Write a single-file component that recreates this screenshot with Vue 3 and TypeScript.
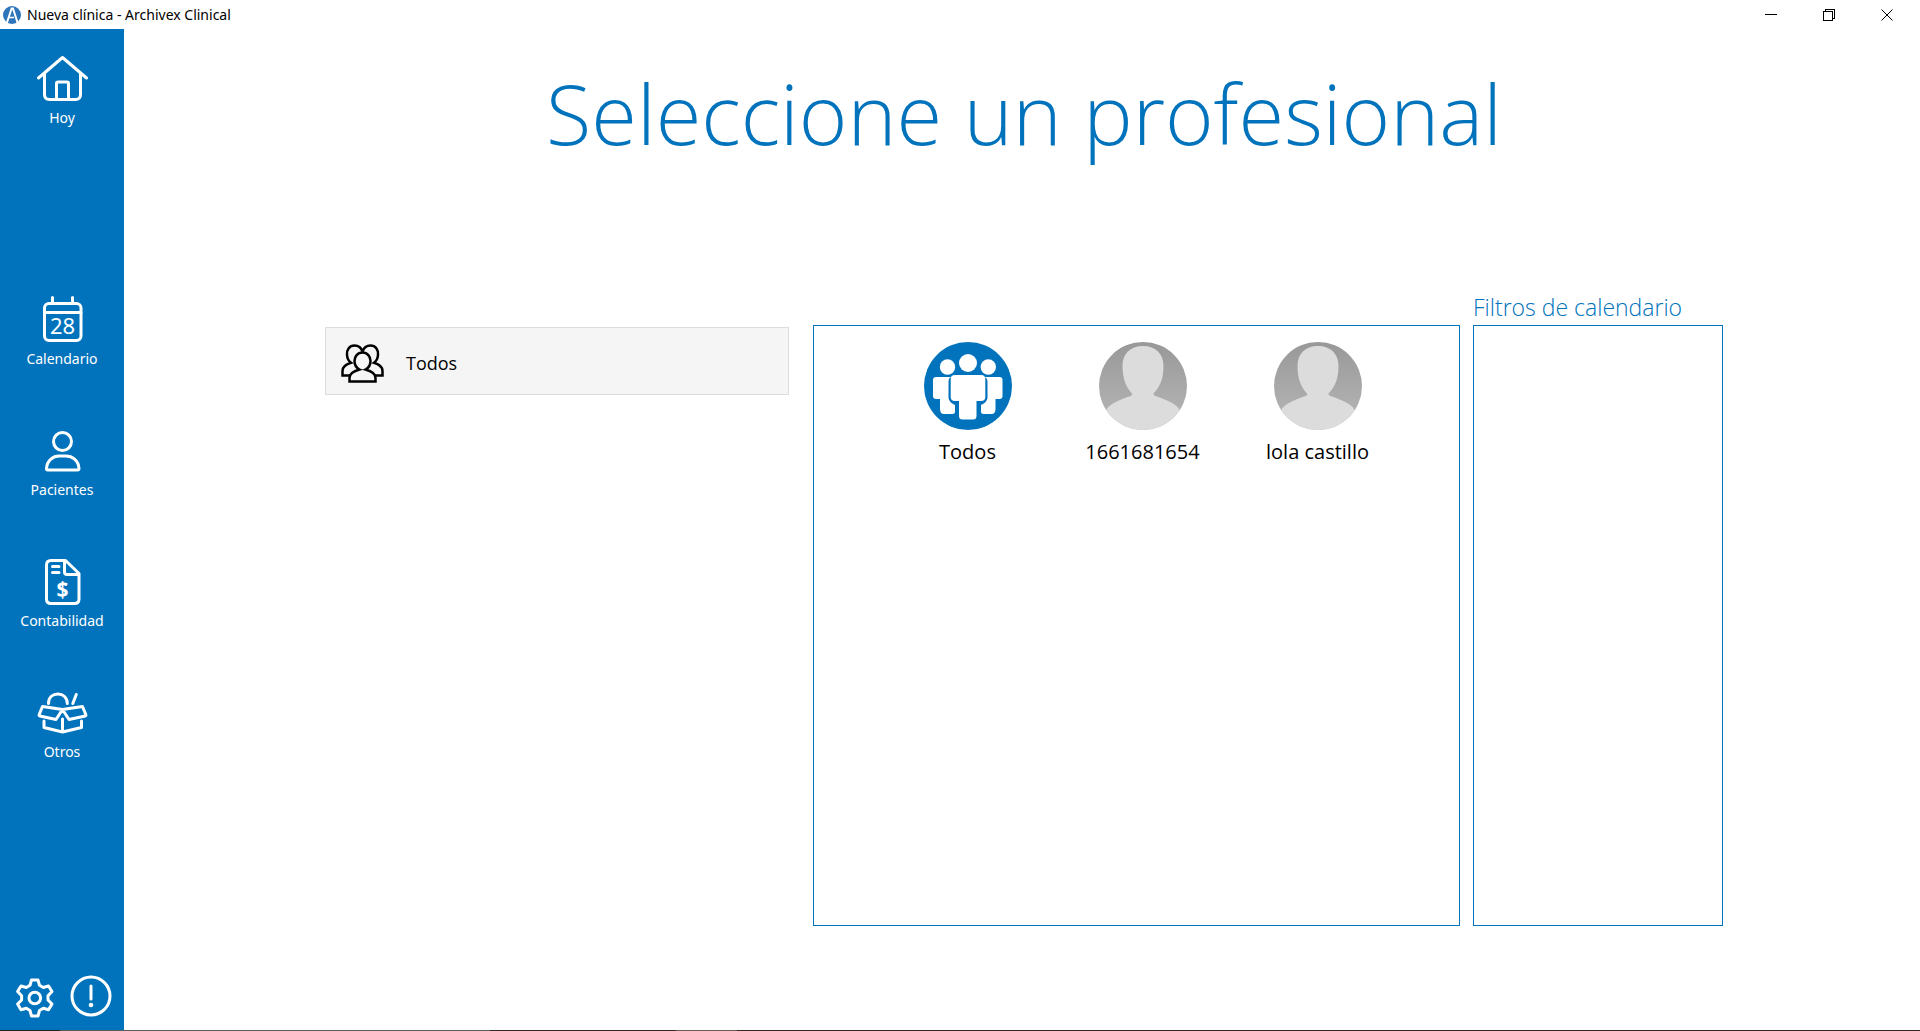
<script setup lang="ts">
interface Professional {
  name: string
  group: boolean
}

const professionals: Professional[] = [
  { name: 'Todos', group: true },
  { name: '1661681654', group: false },
  { name: 'lola castillo', group: false },
]
</script>

<template>
  <div class="window">
    <header class="titlebar">
      <svg class="logo" viewBox="0 0 18 18" aria-hidden="true">
        <circle cx="9" cy="9" r="9" fill="#2e74bb" />
        <path d="M3.5 18 L8.6 2.5 L10 2.5 L15 18" fill="none" stroke="#fff" stroke-width="2" />
        <path d="M5.5 11.5 H11" stroke="#fff" stroke-width="1.5" />
      </svg>
      <span class="caption">Nueva clínica - Archivex Clinical</span>
      <div class="controls">
        <button type="button" aria-label="Minimizar">
          <svg viewBox="0 0 12 12" shape-rendering="crispEdges"><path d="M0 5.5 H12" /></svg>
        </button>
        <button type="button" aria-label="Restaurar">
          <svg viewBox="0 0 12 12" shape-rendering="crispEdges"><path d="M0.5 2.5 H9.5 V11.5 H0.5 Z M2.5 2.5 V0.5 H11.5 V9.5 H9.5" /></svg>
        </button>
        <button type="button" aria-label="Cerrar">
          <svg viewBox="0 0 12 12"><path d="M0.5 0.5 L11.5 11.5 M11.5 0.5 L0.5 11.5" /></svg>
        </button>
      </div>
    </header>

    <div class="body">
      <nav class="sidebar">
        <a class="item home" href="#hoy">
          <svg viewBox="0 0 52 48" aria-hidden="true">
            <path d="M2.5 24 L26.5 3.5 L50.5 24 M8.5 20 V40.5 Q8.5 45.5 13.5 45.5 H39.5 Q44.5 45.5 44.5 40.5 V20 M20.5 45 V29.5 Q20.5 28 22 28 H31 Q32.5 28 32.5 29.5 V45" />
          </svg>
          Hoy
        </a>
        <a class="item" href="#calendario">
          <svg viewBox="0 0 52 48" aria-hidden="true">
            <rect x="8.5" y="8.5" width="36.5" height="37" rx="4.5" />
            <path d="M8.5 17.5 H45 M16.5 2.500 V8.5 M36.5 2.500 V8.5" />
            <text x="26.500" y="39" font-size="22">28</text>
          </svg>
          Calendario
        </a>
        <a class="item" href="#pacientes">
          <svg viewBox="0 0 52 48" aria-hidden="true">
            <circle cx="26.5" cy="15.5" r="9" />
            <path d="M11.5 44 Q10.500 44 10.5 42.5 C11 34 17.5 30 23 30 H30 C36 30 42.5 34 43 42.5 Q43 44 41.5 44 Z" />
          </svg>
          Pacientes
        </a>
        <a class="item" href="#contabilidad">
          <svg viewBox="0 0 52 48" aria-hidden="true">
            <path d="M15 3.5 H29.5 L43 16.5 V42 Q43 46.5 38.5 46.5 H15 Q10.5 46.5 10.5 42 V8 Q10.5 3.5 15 3.5 Z M28.5 4 V15 Q28.5 17.5 31 17.5 H43 M16.500 9.5 H23 M16.500 15.5 H23" />
            <text x="26.500" y="40" font-size="21" font-weight="700">$</text>
          </svg>
          Contabilidad
        </a>
        <a class="item" href="#otros">
          <svg viewBox="0 0 52 48" aria-hidden="true">
            <path d="M12.5 15.5 C12.5 9 17 6 22 6 C27 6 31.3 9.5 31.3 15.5 M40.3 6.5 L36.8 15.5" />
            <path d="M6.5 18.5 L26.5 21.5 L20 31.5 L3.8 28 Q2.8 27.5 3.2 26.5 Z M46.5 18.5 L26.5 21.5 L33 31.5 L49.2 28 Q50.2 27.5 49.8 26.5 Z M8 33 V39.5 L26.5 44 L45.5 39.5 V33 M26.5 31 V44" />
          </svg>
          Otros
        </a>
        <div class="tools">
          <button type="button" aria-label="Ajustes">
            <svg viewBox="0 0 42 42">
              <path d="M17.5 5 H24 L25.5 10.3 L29.3 12.5 L34.5 11 L38 16.5 L34 20.7 V25 L38 29 L34.5 34.7 L29.3 33.2 L25.5 35.5 L24 41 H17.5 L16 35.5 L12.3 33.2 L7 34.7 L3.6 29 L7.6 25 V20.7 L3.6 16.5 L7 11 L12.3 12.5 L16 10.3 Z" />
              <circle cx="20.8" cy="23" r="5.8" />
            </svg>
          </button>
          <button type="button" aria-label="Avisos">
            <svg viewBox="0 0 42 42">
              <circle cx="21" cy="21" r="19" />
              <path d="M21 11 V24" stroke-width="3" />
              <circle class="dot" cx="21" cy="30" r="2.3" />
            </svg>
          </button>
        </div>
      </nav>

      <main class="content">
        <h1>Seleccione un profesional</h1>
        <div class="columns">
          <section class="groups">
            <button class="group" type="button">
              <svg viewBox="0 0 43 39" aria-hidden="true">
                <path d="M21.5 7.5 C20 3 17 1.5 13.5 1.5 C8.5 1.5 5.5 5.5 6 11 C6.3 15 7.5 17 10 18.8 C6 20 1.5 22 1.5 27 V31.5 H9" />
                <path d="M21.5 7.5 C23 3 26 1.5 29.5 1.5 C34.5 1.5 37.5 5.5 37 11 C36.7 15 35.5 17 33 18.8 C37 20 41.5 22 41.5 27 V31.5 H34" />
                <path d="M21.5 8.5 C16.5 8.5 13.5 12.5 13.5 17 C13.5 21.5 15.5 24 18.5 25.5 C13 27 8.5 29 8.5 34 V37.5 H34.5 V34 C34.5 29 30 27 24.5 25.5 C27.5 24 29.5 21.5 29.5 17 C29.5 12.5 26.5 8.5 21.5 8.5 Z" fill="#f5f5f5" />
              </svg>
              Todos
            </button>
          </section>

          <section class="people panel">
            <button v-for="p in professionals" :key="p.name" class="person" type="button">
              <svg v-if="p.group" viewBox="0 0 88 88" aria-hidden="true">
                <circle cx="44" cy="44" r="44" fill="#0173bc" />
                <g fill="#fff">
                  <circle cx="44" cy="21" r="9" />
                  <circle cx="23.5" cy="25" r="7.7" />
                  <circle cx="64.3" cy="25" r="7.7" />
                  <path d="M12 35 H27 Q24.5 36 24.5 40 V56 Q25.5 61 31 63 V69.5 Q31 72 28.5 72 H20 Q16 72 16 67 V57 H12 Q9 57 9 54 V38 Q9 35 12 35 Z" />
                  <path d="M75.5 35 H60.5 Q63.5 36 63.5 40 V56 Q62.5 61 57 63 V69.5 Q57 72 59.5 72 H67.5 Q71.5 72 71.5 67 V57 H75.5 Q78.5 57 78.5 54 V38 Q78.5 35 75.5 35 Z" />
                  <path d="M31 33 H57 Q61.3 33 61.3 37 V55 Q61.3 59 57 59 H52.5 V74 Q52.5 77.5 49 77.5 H38.5 Q35 77.5 35 74 V59 H31 Q26.7 59 26.7 55 V37 Q26.7 33 31 33 Z" />
                </g>
              </svg>
              <svg v-else viewBox="0 0 88 88" aria-hidden="true">
                <defs>
                  <linearGradient id="shade" x1="0" y1="0" x2="0" y2="1">
                    <stop offset="0" stop-color="#989898" />
                    <stop offset="1" stop-color="#b8b8b8" />
                  </linearGradient>
                  <clipPath id="disc"><circle cx="44" cy="44" r="44" /></clipPath>
                </defs>
                <g clip-path="url(#disc)">
                  <rect width="88" height="88" fill="url(#shade)" />
                  <path d="M44 4 C57 4 64.500 12 64.500 24 C64.500 37 61 45 54.500 51.500 Q54 53.500 58 54.500 C67 58 79 62 81 69 L88 88 H0 L7 69 C9 62 21 58 30 54.500 Q34 53.500 33 51.500 C27 45 23.500 37 23.500 24 C23.500 12 31 4 44 4 Z" fill="#dcdcdc" />
                </g>
              </svg>
              {{ p.name }}
            </button>
          </section>

          <section class="filters">
            <h2>Filtros de calendario</h2>
            <div class="panel"></div>
          </section>
        </div>
      </main>
    </div>
    <div class="edge"></div>
  </div>
</template>

<style>
body {
  margin: 0;
  background: #fff;
}
</style>

<style scoped>
.window {
  display: flex;
  flex-direction: column;
  min-height: 100vh;
  font-family: "Open Sans", "Noto Sans", sans-serif;
  color: #000;
}
button {
  padding: 0;
  border: 0;
  background: none;
  font: inherit;
  color: inherit;
}
.titlebar {
  display: flex;
  align-items: center;
  height: 29px;
  padding: 0 4px 0 3px;
  font-family: "Noto Sans", "Open Sans", sans-serif;
  font-size: 14px;
}
.logo {
  width: 18px;
  height: 18px;
  margin-right: 6px;
}
.controls {
  display: flex;
  margin-left: auto;
}
.controls button {
  display: flex;
  align-items: center;
  justify-content: center;
  width: 58px;
  height: 29px;
}
.controls svg {
  width: 12px;
  height: 12px;
  fill: none;
  stroke: #000;
  stroke-width: 1;
}
.body {
  display: flex;
  flex: 1;
}
.sidebar {
  display: flex;
  flex-direction: column;
  align-items: center;
  gap: 57px;
  box-sizing: border-box;
  width: 124px;
  padding: 25px 0 13px;
  background: #0173bc;
  color: #fff;
}
.sidebar svg {
  fill: none;
  stroke: #fff;
  stroke-width: 3;
  stroke-linecap: round;
  stroke-linejoin: round;
}
.sidebar text {
  fill: #fff;
  stroke: none;
  text-anchor: middle;
}
.sidebar .dot {
  fill: #fff;
  stroke: none;
}
.item {
  display: flex;
  flex-direction: column;
  align-items: center;
  gap: 6px;
  font-family: "Noto Sans", "Open Sans", sans-serif;
  font-size: 14px;
  line-height: 20px;
  color: #fff;
  text-decoration: none;
}
.item svg {
  width: 52px;
  height: 48px;
}
.home {
  margin-bottom: 110px;
}
.tools {
  display: flex;
  gap: 14px;
  margin-top: auto;
  padding-left: 2px;
}
.tools svg {
  display: block;
  width: 42px;
  height: 42px;
  overflow: visible;
}
.content {
  display: flex;
  flex: 1;
  flex-direction: column;
  padding: 24px 197px 104px 201px;
}
h1 {
  margin: 0;
  font-size: 83px;
  font-weight: 300;
  line-height: 120px;
  text-align: center;
  white-space: nowrap;
  color: #0173bc;
}
.columns {
  display: grid;
  grid-template-columns: 464fr 24px 647fr 13px 250px;
  flex: 1;
  padding-top: 152px;
}
.groups {
  grid-column: 1;
  padding-top: 2px;
}
.group {
  display: flex;
  align-items: center;
  gap: 22px;
  box-sizing: border-box;
  width: 100%;
  height: 68px;
  padding: 4px 15px 0;
  border: 1px solid #dcdcdc;
  background: #f5f5f5;
  font-size: 18px;
  line-height: 24px;
}
.group svg {
  width: 43px;
  height: 39px;
  fill: none;
  stroke: #000;
  stroke-width: 2.5;
}
.panel {
  box-sizing: border-box;
  border: 1px solid #0173bc;
}
.people {
  display: flex;
  grid-column: 3;
  align-items: flex-start;
  justify-content: center;
  padding: 16px 0 0 12px;
}
.person {
  display: flex;
  flex-direction: column;
  align-items: center;
  gap: 8px;
  width: 175px;
  font-size: 20px;
  line-height: 28px;
}
.person svg {
  width: 88px;
  height: 88px;
}
.filters {
  display: flex;
  flex-direction: column;
  grid-column: 5;
  margin-top: -36px;
}
.filters .panel {
  flex: 1;
}
h2 {
  margin: 0;
  font-size: 23px;
  font-weight: 300;
  line-height: 36px;
  white-space: nowrap;
  color: #0173bc;
}
.edge {
  height: 1px;
  background: linear-gradient(to right, #222 60px, #5c5c5c 60px 490px, #352a22 490px 676px, #6b6055 676px 737px, #352a22 737px);
}
</style>
